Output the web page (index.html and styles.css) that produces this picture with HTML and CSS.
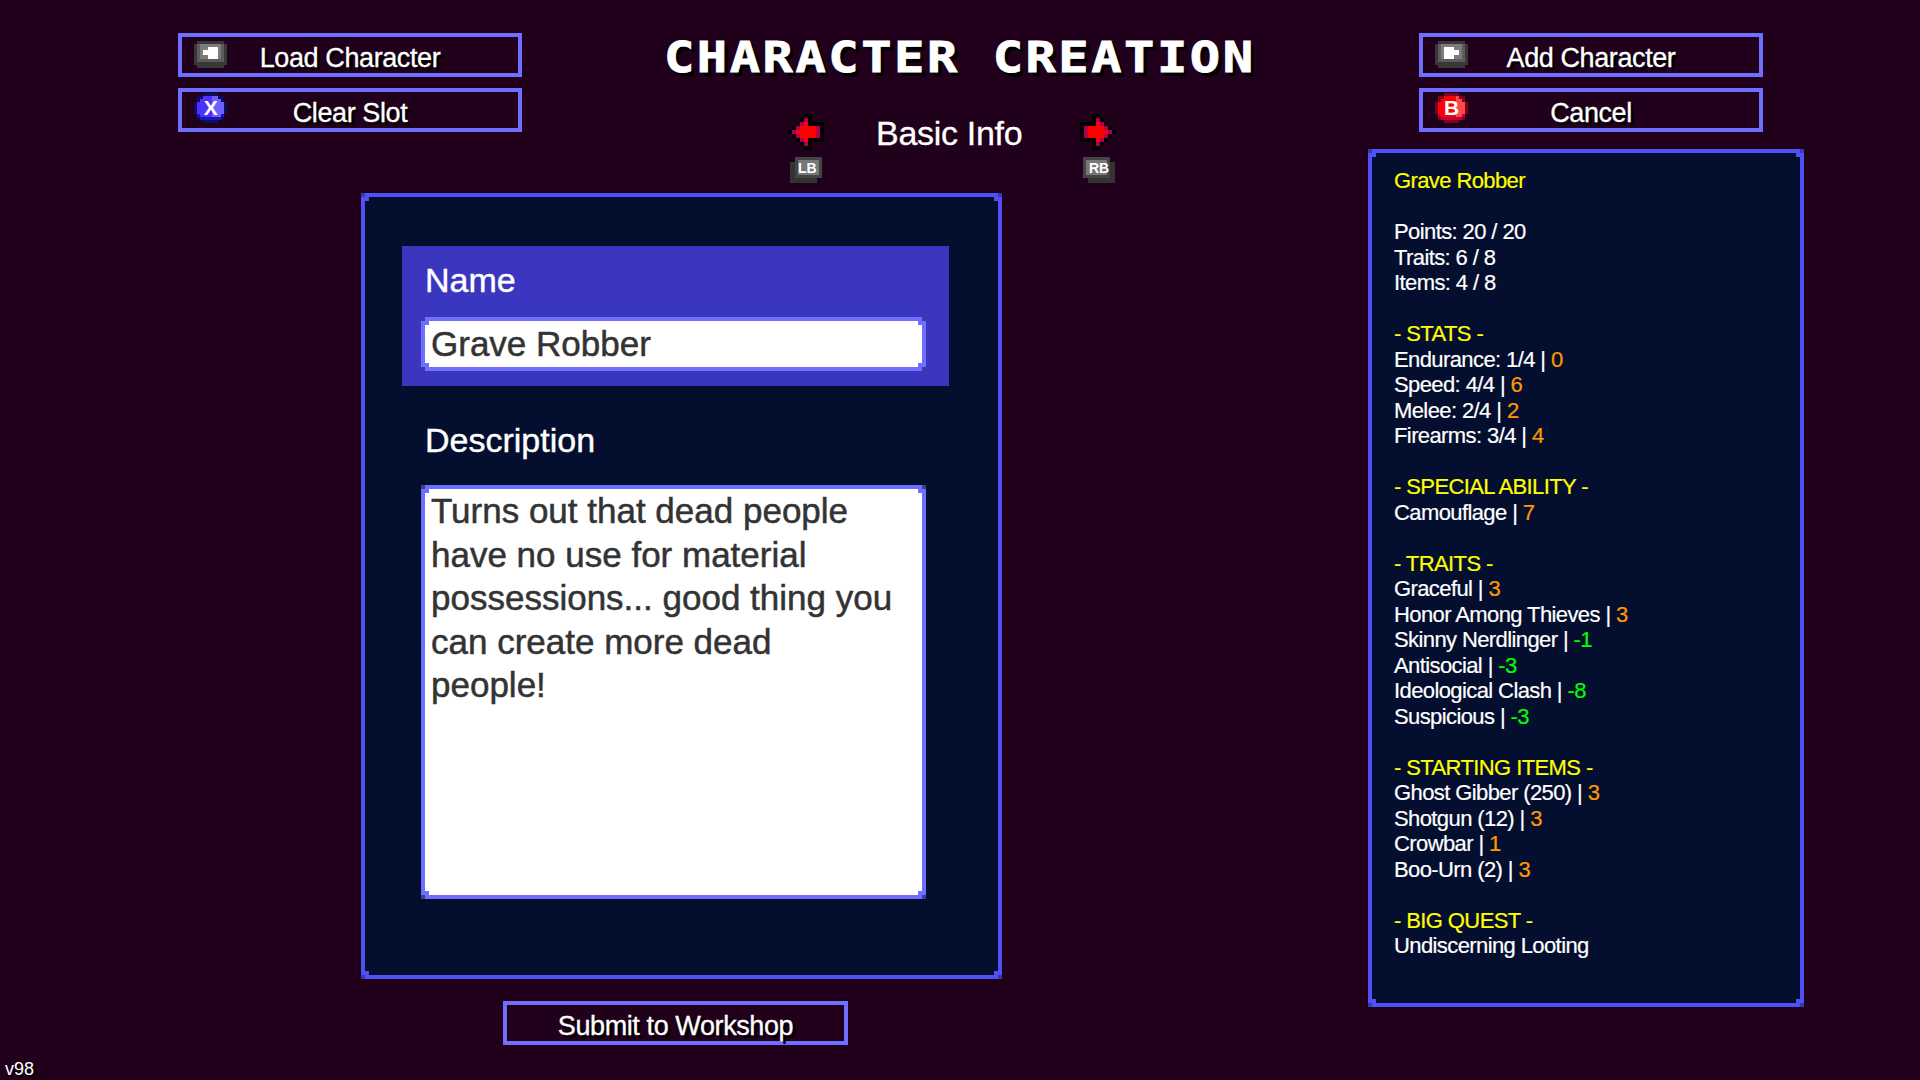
FILE: index.html
```html
<!DOCTYPE html>
<html lang="en">
<head>
    <meta charset="UTF-8">
    <title>Character Creation</title>
    <link rel="stylesheet" href="styles.css">
</head>
<body>
    <div class="screen">
        <div class="left-area">
            <div class="header">
                <div class="btn-stack">
                    <button class="btn">
                        <svg class="icon" width="33" height="27" viewBox="0 0 33 27" shape-rendering="crispEdges">
                            <path fill="#383838" d="M3 0H30V3H33V24H30V27H3V24H0V3H3Z"/>
                            <path fill="#5c5c5c" d="M3 3H30V21H3Z"/>
                            <path fill="#7c7c7c" d="M6 3H27V18H6Z"/>
                            <path fill="#fff" d="M9 9H14V6H24V18H14V14H9Z"/>
                        </svg>
                        <span>Load Character</span>
                    </button>
                    <button class="btn">
                        <svg class="icon icon-round" width="33" height="30" viewBox="0 0 33 30" shape-rendering="crispEdges">
                            <path fill="#0c0c60" d="M9 0H24V3H30V9H33V21H30V27H24V30H9V27H3V21H0V9H3V3H9Z"/>
                            <path fill="#1818b8" d="M9 3H24V6H27V9H30V24H27V27H6V24H3V9H6V6H9Z"/>
                            <path fill="#5030ff" d="M9 3H24V6H27V9H30V21H27V24H6V21H3V9H6V6H9Z"/>
                            <path fill="#6e60ff" d="M18 3H24V6H27V9H30V21H27V24H18Z"/>
                            <text x="16.5" y="22" text-anchor="middle" class="pad-letter">X</text>
                        </svg>
                        <span>Clear Slot</span>
                    </button>
                </div>
                <div class="center-head">
                    <h1>CHARACTER CREATION</h1>
                    <div class="tabs">
                        <div class="tab-nav">
                            <svg width="36" height="36" viewBox="0 0 9 9" shape-rendering="crispEdges">
                                <path fill="#000" d="M4 0H6V2H9V7H6V9H4V8H3V7H2V6H1V5H0V4H1V3H2V2H3V1H4Z"/>
                                <path fill="#b00050" d="M4 1H5V3H8V6H5V8H4V7H3V6H2V5H1V4H2V3H3V2H4Z"/>
                                <path fill="#f00" d="M4 2H5V3H7V6H5V7H4V6H3V5H2V4H3V3H4Z"/>
                            </svg>
                            <div class="key key-left">LB</div>
                        </div>
                        <div class="tab-label">Basic Info</div>
                        <div class="tab-nav">
                            <svg class="flip" width="36" height="36" viewBox="0 0 9 9" shape-rendering="crispEdges">
                                <path fill="#000" d="M4 0H6V2H9V7H6V9H4V8H3V7H2V6H1V5H0V4H1V3H2V2H3V1H4Z"/>
                                <path fill="#b00050" d="M4 1H5V3H8V6H5V8H4V7H3V6H2V5H1V4H2V3H3V2H4Z"/>
                                <path fill="#f00" d="M4 2H5V3H7V6H5V7H4V6H3V5H2V4H3V3H4Z"/>
                            </svg>
                            <div class="key key-right">RB</div>
                        </div>
                    </div>
                </div>
            </div>

            <div class="panel frame">
                <div class="name-block">
                    <label>Name</label>
                    <div class="field frame name-field">Grave Robber</div>
                </div>
                <div class="desc-block">
                    <label>Description</label>
                    <div class="field frame desc-field">Turns out that dead people<br>have no use for material<br>possessions... good thing you<br>can create more dead<br>people!</div>
                </div>
            </div>

            <button class="btn submit-btn"><span>Submit to Workshop</span></button>
            <div class="version">v98</div>
        </div>

        <div class="right-area">
            <div class="btn-stack right-btns">
                <button class="btn">
                    <svg class="icon" width="33" height="27" viewBox="0 0 33 27" shape-rendering="crispEdges">
                        <path fill="#383838" d="M3 0H30V3H33V24H30V27H3V24H0V3H3Z"/>
                        <path fill="#5c5c5c" d="M3 3H30V21H3Z"/>
                        <path fill="#7c7c7c" d="M6 3H27V18H6Z"/>
                        <path fill="#fff" d="M9 6H19V9H24V14H19V18H9Z"/>
                    </svg>
                    <span>Add Character</span>
                </button>
                <button class="btn">
                    <svg class="icon icon-round" width="33" height="30" viewBox="0 0 33 30" shape-rendering="crispEdges">
                        <path fill="#800020" d="M9 0H24V3H30V9H33V21H30V27H24V30H9V27H3V21H0V9H3V3H9Z"/>
                        <path fill="#c00040" d="M9 3H24V6H27V9H30V24H27V27H6V24H3V9H6V6H9Z"/>
                        <path fill="#f00" d="M9 3H24V6H27V9H30V21H27V24H6V21H3V9H6V6H9Z"/>
                        <path fill="#ff4848" d="M21 3H24V6H27V9H30V21H27V24H21Z"/>
                        <text x="16.5" y="22" text-anchor="middle" class="pad-letter">B</text>
                    </svg>
                    <span>Cancel</span>
                </button>
            </div>

            <div class="stats frame">
                <section class="stat-group">
                    <div class="hl">Grave Robber</div>
                </section>
                <section class="stat-group">
                    <div>Points: 20 / 20</div>
                    <div>Traits: 6 / 8</div>
                    <div>Items: 4 / 8</div>
                </section>
                <section class="stat-group">
                    <div class="hl">- STATS -</div>
                    <div>Endurance: 1/4 | <span class="cost">0</span></div>
                    <div>Speed: 4/4 | <span class="cost">6</span></div>
                    <div>Melee: 2/4 | <span class="cost">2</span></div>
                    <div>Firearms: 3/4 | <span class="cost">4</span></div>
                </section>
                <section class="stat-group">
                    <div class="hl">- SPECIAL ABILITY -</div>
                    <div>Camouflage | <span class="cost">7</span></div>
                </section>
                <section class="stat-group">
                    <div class="hl">- TRAITS -</div>
                    <div>Graceful | <span class="cost">3</span></div>
                    <div>Honor Among Thieves | <span class="cost">3</span></div>
                    <div>Skinny Nerdlinger | <span class="gain">-1</span></div>
                    <div>Antisocial | <span class="gain">-3</span></div>
                    <div>Ideological Clash | <span class="gain">-8</span></div>
                    <div>Suspicious | <span class="gain">-3</span></div>
                </section>
                <section class="stat-group">
                    <div class="hl">- STARTING ITEMS -</div>
                    <div>Ghost Gibber (250) | <span class="cost">3</span></div>
                    <div>Shotgun (12) | <span class="cost">3</span></div>
                    <div>Crowbar | <span class="cost">1</span></div>
                    <div>Boo-Urn (2) | <span class="cost">3</span></div>
                </section>
                <section class="stat-group">
                    <div class="hl">- BIG QUEST -</div>
                    <div>Undiscerning Looting</div>
                </section>
            </div>
        </div>
    </div>
</body>
</html>
```

FILE: styles.css
```css
* {
    box-sizing: border-box;
}
html, body {
    margin: 0;
    padding: 0;
}
body {
    background-color: #21001c;
    color: #fff;
    font-family: "Liberation Sans", Arial, sans-serif;
    overflow: hidden;
}
.screen {
    display: flex;
    width: 1920px;
    height: 1080px;
}
.left-area {
    display: flex;
    flex-direction: column;
    width: 1368px;
}
.right-area {
    width: 436px;
    padding-top: 33px;
}
.header {
    display: flex;
    height: 193px;
    padding: 33px 0 0 178px;
}
.btn-stack {
    display: flex;
    flex-direction: column;
    gap: 11px;
    width: 344px;
}
.right-btns {
    margin-left: 51px;
}
.btn {
    display: grid;
    grid-template-columns: 1fr auto 1fr;
    align-items: center;
    width: 344px;
    height: 44px;
    padding: 0 12px;
    border: 4px solid #6e6eff;
    background: none;
    color: #fff;
    font-family: inherit;
    font-size: 27px;
    letter-spacing: -0.4px;
    text-shadow: 3px 3px 0 #000;
}
.btn span {
    display: inline-block;
    grid-column: 2;
    padding-top: 6px;
    -webkit-text-stroke: 0.3px #fff;
}
.icon {
    grid-column: 1;
    grid-row: 1;
    align-self: start;
    margin-top: 4px;
}
.icon-round {
    margin-top: 1px;
}
.pad-letter {
    fill: #fff;
    font-family: "Liberation Sans", sans-serif;
    font-size: 21px;
    font-weight: bold;
    text-shadow: none;
}
.center-head {
    margin-left: 142px;
}
h1 {
    margin: 2px 0 0;
    font-family: "DejaVu Sans Mono", monospace;
    font-size: 42px;
    font-weight: bold;
    line-height: 46px;
    letter-spacing: 2.1px;
    white-space: nowrap;
    text-shadow: 3px 4px 0 #000;
    -webkit-text-stroke: 0.8px #fff;
    transform: scaleX(1.2);
    transform-origin: left center;
}
.tabs {
    display: flex;
    margin-top: 33px;
    padding-left: 124px;
}
.tab-nav {
    display: flex;
    flex-direction: column;
}
.flip {
    transform: scaleX(-1);
}
.tab-label {
    width: 256px;
    padding-left: 52px;
    font-size: 34px;
    line-height: 39px;
    letter-spacing: -0.3px;
    -webkit-text-stroke: 0.3px #fff;
}
.key {
    width: 27px;
    height: 21px;
    margin-top: 7px;
    border: 3px solid #444;
    background-color: #777;
    font-size: 14px;
    font-weight: bold;
    line-height: 17px;
    text-align: center;
}
.key-left {
    margin-left: 7px;
    padding-right: 3px;
    box-shadow: -5px 5px 0 #333;
}
.key-right {
    margin-left: 3px;
    padding-left: 3px;
    box-shadow: 5px 5px 0 #333;
}

/* pixel corners on the framed boxes */
.frame {
    position: relative;
    --edge: #5050f5;
    --corner: #3a3ab0;
    border: 4px solid var(--edge);
}
.frame::before {
    content: "";
    position: absolute;
    inset: -4px;
    pointer-events: none;
    background-repeat: no-repeat;
    background-size: 4px 4px;
    background-image:
        linear-gradient(var(--corner), var(--corner)),
        linear-gradient(var(--corner), var(--corner)),
        linear-gradient(var(--corner), var(--corner)),
        linear-gradient(var(--corner), var(--corner)),
        linear-gradient(var(--edge), var(--edge)),
        linear-gradient(var(--edge), var(--edge)),
        linear-gradient(var(--edge), var(--edge)),
        linear-gradient(var(--edge), var(--edge));
    background-position:
        0 0,
        100% 0,
        0 100%,
        100% 100%,
        4px 4px,
        calc(100% - 4px) 4px,
        4px calc(100% - 4px),
        calc(100% - 4px) calc(100% - 4px);
}

.panel {
    width: 641px;
    height: 786px;
    margin-left: 361px;
    padding: 49px 0 0 37px;
    background-color: #040e2e;
}
label {
    display: block;
    font-size: 34px;
    line-height: 44px;
    -webkit-text-stroke: 0.4px #fff;
}
.name-block {
    width: 547px;
    height: 140px;
    padding: 12px 0 0 19px;
    background-color: #3a36c0;
}
.name-block label,
.desc-block label {
    padding-left: 4px;
}
.field {
    --edge: #6e6eff;
    --corner: #3c3c9c;
    width: 505px;
    padding-left: 6px;
    background-color: #fff;
    color: #333;
    font-size: 35px;
    -webkit-text-stroke: 0.5px #333;
}
.name-field {
    height: 54px;
    margin-top: 15px;
    line-height: 46px;
}
.desc-block {
    padding: 32px 0 0 19px;
}
.desc-field {
    height: 414px;
    margin-top: 23px;
    line-height: 43.5px;
}
.submit-btn {
    display: block;
    width: 345px;
    margin: 22px 0 0 503px;
    padding: 0;
    text-align: center;
}
.version {
    margin-top: auto;
    padding-left: 5px;
    font-size: 18px;
    line-height: 22px;
    text-shadow: 2px 2px 0 #000;
}

.stats {
    width: 436px;
    height: 858px;
    margin-top: 17px;
    padding: 15px 0 0 22px;
    background-color: #040e2e;
    font-size: 22px;
    line-height: 25.5px;
    letter-spacing: -0.6px;
    -webkit-text-stroke: 0.2px currentColor;
}
.stat-group {
    margin-bottom: 25.5px;
}
.hl {
    color: #ff0;
}
.cost {
    color: #f90;
}
.gain {
    color: #0f0;
}
```
